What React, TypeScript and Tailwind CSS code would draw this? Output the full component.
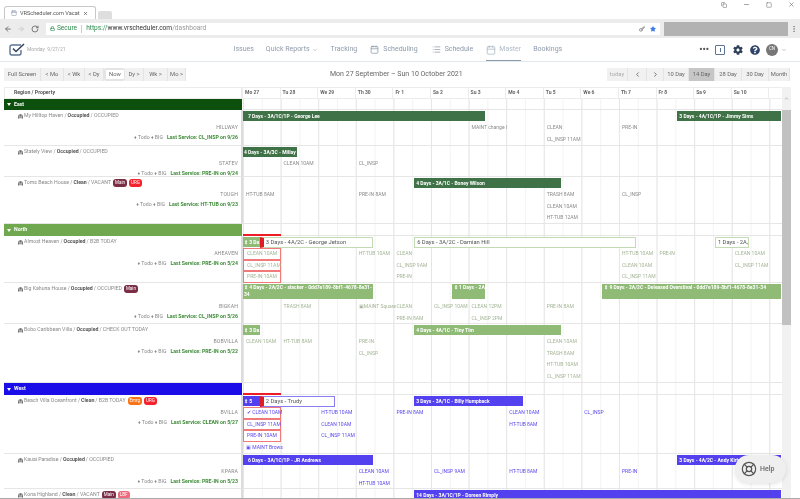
import React from "react";
import {
  ArrowLeft,
  ArrowRight,
  Calendar,
  ChevronDown,
  ChevronLeft,
  ChevronRight,
  Key,
  LifeBuoy,
  List,
  Lock,
  Minus,
  MoreVertical,
  RotateCw,
  Square,
  Star,
  X,
  ChevronUp,
  Copy,
  BedDouble,
} from "lucide-react";
import { FaCog, FaQuestionCircle } from "react-icons/fa";

type Tone = "east" | "north" | "west";
type Item = { c: number; r: number; t: string; boxed?: boolean };
type BarData = {
  c: number;
  span: number;
  t: string;
  outline?: boolean;
  marker?: boolean;
  tall?: boolean;
};
type Badge = { t: string; cls: string };
type Row = {
  h: number;
  first?: number;
  name: string;
  status: string;
  note: string;
  code: string;
  service: string;
  badges?: Badge[];
  bars: BarData[];
  items: Item[];
  flagged?: boolean;
};

const main = { t: "Main", cls: "bg-[#7a2d45]" };
const urg = { t: "URG", cls: "bg-[#f5222d]" };
const emrg = { t: "Emrg", cls: "bg-[#f97316]" };
const lbf = { t: "LBF", cls: "bg-[#ee6a7c]" };

const east: Row[] = [
  {
    h: 36,
    name: "My Hilltop Haven",
    status: "Occupied",
    note: "OCCUPIED",
    code: "HILLWAY",
    service: "CL_INSP on 9/26",
    bars: [
      { c: 0, span: 13, t: "7 Days - 3A/1C/1P - George Lee" },
      { c: 23, span: 6, t: "3 Days - 4A/1C/1P - Jimmy Sims" },
    ],
    items: [
      { c: 12, r: 2, t: "MAINT change l" },
      { c: 16, r: 2, t: "CLEAN" },
      { c: 20, r: 2, t: "PRE-IN" },
      { c: 16, r: 3, t: "CL_INSP 11AM" },
    ],
  },
  {
    h: 31,
    name: "Stately View",
    status: "Occupied",
    note: "OCCUPIED",
    code: "STATEV",
    service: "PRE-IN on 9/24",
    bars: [{ c: 0, span: 3, t: "4 Days - 3A/3C - Millay" }],
    items: [
      { c: 2, r: 2, t: "CLEAN 10AM" },
      { c: 6, r: 2, t: "CL_INSP" },
    ],
  },
  {
    h: 47,
    name: "Toms Beach House",
    status: "Clean",
    note: "VACANT",
    code: "TOUGH",
    service: "HT-TUB on 9/23",
    badges: [main, urg],
    bars: [{ c: 9, span: 8, t: "4 Days - 3A/1C - Boney Wilson" }],
    items: [
      { c: 0, r: 2, t: "HT-TUB 8AM" },
      { c: 6, r: 2, t: "PRE-IN 8AM" },
      { c: 16, r: 2, t: "TRASH 8AM" },
      { c: 20, r: 2, t: "CL_INSP" },
      { c: 16, r: 3, t: "CLEAN 10AM" },
      { c: 16, r: 4, t: "HT-TUB 12AM" },
    ],
  },
];

const north: Row[] = [
  {
    h: 47,
    flagged: true,
    name: "Almost Heaven",
    status: "Occupied",
    note: "B2B TODAY",
    code: "AHEAVEN",
    service: "PRE-IN on 5/24",
    bars: [
      { c: 0, span: 1, t: "⇕ 3 Da" },
      { c: 1, span: 6, t: "3 Days - 4A/2C - George Jetson", outline: true, marker: true },
      { c: 9, span: 12, t: "6 Days - 3A/2C - Damian Hill", outline: true },
      { c: 25, span: 2, t: "1 Days - 2A,", outline: true },
    ],
    items: [
      { c: 0, r: 2, t: "CLEAN 10AM", boxed: true },
      { c: 6, r: 2, t: "HT-TUB 10AM" },
      { c: 8, r: 2, t: "CLEAN" },
      { c: 20, r: 2, t: "HT-TUB 10AM" },
      { c: 22, r: 2, t: "PRE-IN" },
      { c: 26, r: 2, t: "CLEAN 10AM" },
      { c: 0, r: 3, t: "CL_INSP 11AM", boxed: true },
      { c: 8, r: 3, t: "CL_INSP 9AM" },
      { c: 20, r: 3, t: "CLEAN 10AM" },
      { c: 26, r: 3, t: "CL_INSP 11AM" },
      { c: 0, r: 4, t: "PRE-IN 10AM", boxed: true },
      { c: 8, r: 4, t: "PRE-IN" },
      { c: 20, r: 4, t: "CL_INSP 11AM" },
    ],
  },
  {
    h: 41,
    first: 18,
    name: "Big Kahuna House",
    status: "Occupied",
    note: "OCCUPIED",
    code: "BIGKAH",
    service: "CL_INSP on 5/26",
    badges: [main],
    bars: [
      { c: 0, span: 7, t: "⇕ 4 Days - 2A/2C - slacker - 0dd7e189-8bf1-4678-8e31-34", tall: true },
      { c: 11, span: 2, t: "⇕ 1 Days - 2A", tall: true },
      { c: 19, span: 10, t: "⇕ 9 Days - 2A/2C - Deleased Overstival - 0dd7e189-8bf1-4678-8e31-34", tall: true },
    ],
    items: [
      { c: 2, r: 2, t: "TRASH 8AM" },
      { c: 6, r: 2, t: "▣MAINT Square" },
      { c: 8, r: 2, t: "CLEAN" },
      { c: 10, r: 2, t: "CL_INSP 10AM" },
      { c: 12, r: 2, t: "CLEAN 12PM" },
      { c: 16, r: 2, t: "PRE-IN 8AM" },
      { c: 8, r: 3, t: "PRE-IN 8AM" },
      { c: 12, r: 3, t: "CL_INSP 2PM" },
    ],
  },
  {
    h: 59,
    name: "Bobo Caribbean Villa",
    status: "Occupied",
    note: "CHECK OUT TODAY",
    code: "BOBVILLA",
    service: "PRE-IN on 5/22",
    bars: [
      { c: 0, span: 1, t: "⇕ 3 Da" },
      { c: 9, span: 8, t: "4 Days - 4A/1C - Tiny Tim" },
    ],
    items: [
      { c: 0, r: 2, t: "CLEAN 10AM" },
      { c: 2, r: 2, t: "HT-TUB 8AM" },
      { c: 6, r: 2, t: "PRE-IN" },
      { c: 16, r: 2, t: "CLEAN 10AM" },
      { c: 6, r: 3, t: "CL_INSP" },
      { c: 16, r: 3, t: "TRASH 8AM" },
      { c: 16, r: 4, t: "HT-TUB 10AM" },
      { c: 16, r: 5, t: "CL_INSP 11AM" },
    ],
  },
];

const west: Row[] = [
  {
    h: 59,
    flagged: true,
    name: "Beach Villa Oceanfront",
    status: "Clean",
    note: "B2B TODAY",
    code: "BVILLA",
    service: "CLEAN on 5/27",
    badges: [emrg, urg],
    bars: [
      { c: 0, span: 1, t: "⇕ 5" },
      { c: 1, span: 4, t: "2 Days - Trudy", outline: true, marker: true },
      { c: 9, span: 6, t: "3 Days - 3A/1C - Billy Humpback" },
    ],
    items: [
      { c: 0, r: 2, t: "✔ CLEAN 10AM", boxed: true },
      { c: 4, r: 2, t: "HT-TUB 10AM" },
      { c: 8, r: 2, t: "PRE-IN 8AM" },
      { c: 14, r: 2, t: "CLEAN 10AM" },
      { c: 18, r: 2, t: "CL_INSP" },
      { c: 0, r: 3, t: "CL_INSP 11AM", boxed: true },
      { c: 4, r: 3, t: "CLEAN 10AM" },
      { c: 14, r: 3, t: "HT-TUB 8AM" },
      { c: 0, r: 4, t: "PRE-IN 10AM", boxed: true },
      { c: 4, r: 4, t: "CL_INSP 11AM" },
      { c: 0, r: 5, t: "▣ MAINT Brows" },
    ],
  },
  {
    h: 35,
    name: "Kauai Paradise",
    status: "Occupied",
    note: "OCCUPIED",
    code: "KPARA",
    service: "PRE-IN on 5/23",
    bars: [
      { c: 0, span: 7, t: "6 Days - 3A/1C/1P - JR Andrews" },
      { c: 23, span: 6, t: "3 Days - 4A/2C - Andy Kirby" },
    ],
    items: [
      { c: 6, r: 2, t: "CLEAN 10AM" },
      { c: 10, r: 2, t: "CL_INSP 9AM" },
      { c: 14, r: 2, t: "HT-TUB 8AM" },
      { c: 20, r: 2, t: "PRE-IN" },
      { c: 6, r: 3, t: "HT-TUB 10AM" },
    ],
  },
  {
    h: 30,
    name: "Kona Highland",
    status: "Clean",
    note: "VACANT",
    code: "",
    service: "",
    badges: [main, lbf],
    bars: [{ c: 9, span: 20, t: "14 Days - 3A/1C/1P - Doreen Rimply" }],
    items: [],
  },
];

const days = ["Mo 27", "Tu 28", "We 29", "Th 30", "Fr 1", "Sa 2", "Su 3", "Mo 4", "Tu 5", "We 6", "Th 7", "Fr 8", "Sa 9", "Su 10"];

const barColor: Record<Tone, string> = {
  east: "bg-[#3f7246]",
  north: "bg-[#8fbb76]",
  west: "bg-[#5340ee]",
};
const outlineColor: Record<Tone, string> = {
  east: "border-[#3f7246]",
  north: "border-[#c3dab4]",
  west: "border-[#8a7cf2]",
};
const itemColor: Record<Tone, string> = {
  east: "text-[#8a8a8a]",
  north: "text-[#a3b596]",
  west: "text-[#5a49ea]",
};

function TimeBar({ b, tone }: { b: BarData; tone: Tone }) {
  const side = b.c + b.span >= 29 ? "mr-0" : "mr-[2px]";
  if (b.outline) {
    return (
      <div
        style={{ gridColumn: `${b.c + 1} / span ${b.span}`, gridRow: 1 }}
        className={`${side} mt-[1px] flex h-[11px] items-center overflow-hidden whitespace-nowrap border bg-white pl-[2px] text-[5.8px] text-[#555] ${outlineColor[tone]} ${b.marker ? "-ml-[2px] border-l-[4px] border-l-[#e01b24]" : "ml-[2px]"}`}
      >
        {b.t}
      </div>
    );
  }
  return (
    <div
      style={{ gridColumn: `${b.c + 1} / span ${b.span}`, gridRow: 1 }}
      className={`${side} mt-[1px] overflow-hidden text-[5px] font-bold text-white ${b.c > 0 ? "ml-[2px] pl-[2px]" : b.span > 3 && !b.tall ? "pl-[5px]" : "pl-[1px]"} ${b.tall ? "h-[15px] break-all text-[4.7px] leading-[7px]" : "h-[10px] whitespace-nowrap leading-[10px]"} ${barColor[tone]}`}
    >
      {b.t}
    </div>
  );
}

function Timeline({ row, tone }: { row: Row; tone: Tone }) {
  const first = row.first ?? 12;
  return (
    <div
      className="relative grid w-[539px] shrink-0 grid-cols-[repeat(28,18.8px)_12px] auto-rows-[11.7px] border-b border-[#e6e6e6] bg-[linear-gradient(to_right,#e6e6e6_1px,transparent_1px),linear-gradient(to_right,#f3f3f3_1px,transparent_1px)] bg-[size:37.6px_100%,18.8px_100%]"
      style={{ height: row.h, gridTemplateRows: `${first}px` }}
    >
      {row.flagged && <div className="absolute left-0 -top-[2px] h-[2px] w-[38px] bg-[#ee1c25]" />}
      {row.bars.map((b) => (
        <TimeBar key={b.t} b={b} tone={tone} />
      ))}
      {row.items.map((it) => (
        <div
          key={it.c + "-" + it.r}
          style={{ gridColumn: `${it.c + 1} / span ${it.boxed ? 2 : 6}`, gridRow: it.r }}
          className={`flex items-center whitespace-nowrap pl-[3px] text-[5px] ${itemColor[tone]} ${it.boxed ? "border border-[#f07a7a] pl-[2px]" : ""}`}
        >
          {it.t}
        </div>
      ))}
    </div>
  );
}

function PropertyRow({ row, tone }: { row: Row; tone: Tone }) {
  return (
    <div className="flex">
      <div
        className="w-[239px] shrink-0 overflow-hidden border-b border-r-2 border-[#e6e6e6] border-r-[#dcdcdc] pl-[14px] pr-[3px] text-[5.2px] text-[#888]"
        style={{ height: row.h }}
      >
        <div className="flex items-start" style={{ height: row.first ?? 12 }}>
          <div className="flex h-[12px] items-center gap-[1px] whitespace-nowrap">
            <BedDouble size={5} strokeWidth={3} className="text-[#444]" />
            <span>{row.name} / </span>
            <span className="font-bold text-[#555]">{row.status}</span>
            <span> / {row.note}</span>
            {row.badges?.map((b) => (
              <span
                key={b.t}
                className={`ml-[1px] flex h-[8px] items-center rounded-[3px] px-[2px] text-[4.5px] text-white ${b.cls}`}
              >
                {b.t}
              </span>
            ))}
          </div>
        </div>
        {row.code && (
          <div className="flex h-[11.7px] items-center justify-end tracking-[0.1px]">{row.code}</div>
        )}
        {row.service && (
          <div className="flex h-[8px] items-center justify-end gap-[2px] whitespace-nowrap">
            <span>♦ Todo ♦ BIG</span>
            <span className="ml-[2px] font-bold text-[#3d8b37]">Last Service: {row.service}</span>
          </div>
        )}
      </div>
      <Timeline row={row} tone={tone} />
    </div>
  );
}

function Section({ label, cls, h }: { label: string; cls: string; h: number }) {
  return (
    <div className="flex" style={{ height: h }}>
      <div className={`flex w-[238px] shrink-0 items-center gap-[3px] pl-[3px] text-[5.2px] font-bold text-white ${cls}`}>
        <span className="h-0 w-0 border-x-[2px] border-t-[3px] border-x-transparent border-t-white" />
        {label}
      </div>
      <div className="ml-[1px] w-[539px] shrink-0 border-b border-[#e6e6e6] bg-[linear-gradient(to_right,#e6e6e6_1px,transparent_1px),linear-gradient(to_right,#f3f3f3_1px,transparent_1px)] bg-[size:37.6px_100%,18.8px_100%]" />
    </div>
  );
}

function Btn({ t, w, cls = "" }: { t: React.ReactNode; w: number; cls?: string }) {
  return (
    <div
      className={`flex h-[13px] items-center justify-center border-r border-[#e4e4e4] text-[5.8px] text-[#666] ${cls}`}
      style={{ width: w }}
    >
      {t}
    </div>
  );
}

function BrowserBar() {
  return (
    <div className="h-[38px] shrink-0 bg-white">
      <div className="flex h-[19px] items-end justify-between pl-[4px] pr-[5px]">
        <div className="flex items-end">
          <div className="flex h-[13px] w-[92px] items-center gap-[3px] rounded-t-[3px] border border-b-0 border-[#c8c8c8] bg-white pl-[6px] text-[5.6px] text-[#555]">
            <Calendar size={6} className="text-[#7b8ba0]" />
            <span className="whitespace-nowrap">VRScheduler.com Vacat</span>
            <X size={5} strokeWidth={3} className="text-[#555]" />
          </div>
          <div className="ml-[2px] h-[8px] w-[14px] rounded-t-[2px] bg-[#dedede]" />
        </div>
        <div className="mb-[11px] flex items-center gap-[16px] text-[#666]">
          <Copy size={6} />
          <Minus size={7} />
          <Square size={6} />
          <X size={7} />
        </div>
      </div>
      <div className="flex h-[19px] items-center bg-[#ececec] pl-[4px] pr-[2px]">
        <ArrowLeft size={8} strokeWidth={2.5} className="text-[#666]" />
        <ArrowRight size={8} strokeWidth={2.5} className="ml-[5px] text-[#c8c8c8]" />
        <RotateCw size={8} strokeWidth={2.5} className="ml-[6px] text-[#666]" />
        <div className="ml-[7px] flex h-[12px] w-[616px] items-center bg-white pl-[4px] pr-[4px] text-[6.6px]">
          <Lock size={5} strokeWidth={3} className="text-[#2d8a4e]" />
          <span className="ml-[2px] text-[#2d8a4e]">Secure</span>
          <span className="mx-[4px] h-[8px] w-px bg-[#ccc]" />
          <span className="text-[#2d8a4e]">https://</span>
          <span className="text-[#333]">www.vrscheduler.com</span>
          <span className="text-[#999]">/dashboard</span>
          <Key size={6} strokeWidth={3} className="ml-auto text-[#777]" />
          <Star size={6} className="ml-[5px] fill-[#3b78e7] text-[#3b78e7]" />
        </div>
        <div className="ml-[4px] h-[14px] w-[124px] bg-[#b2b2b2]" />
        <MoreVertical size={8} className="ml-[2px] text-[#777]" />
      </div>
    </div>
  );
}

function AppHeader() {
  return (
    <div className="flex h-[24px] shrink-0 items-center border-b border-[#e2e8ee] bg-white text-[7px] text-[#8e9bab]">
      <svg width="16" height="13" viewBox="0 0 16 13" className="ml-[9px]" fill="none">
        <path d="M12 2H3a2 2 0 0 0-2 2v6a2 2 0 0 0 2 2h7a2 2 0 0 0 2-2V7" stroke="#5c7391" strokeWidth="1.4" />
        <path d="M4 5.5l3 3L15 1" stroke="#33465f" strokeWidth="1.6" />
      </svg>
      <span className="ml-[2px] text-[5px] text-[#aaa]">Monday&nbsp;&nbsp;9/27/21</span>
      <span className="ml-[168px]">Issues</span>
      <span className="ml-[12px] flex items-center gap-[2px]">
        Quick Reports <ChevronDown size={6} />
      </span>
      <span className="ml-[13px]">Tracking</span>
      <Calendar size={9} className="ml-[13px]" />
      <span className="ml-[4px]">Scheduling</span>
      <List size={9} className="ml-[14px]" />
      <span className="ml-[4px]">Schedule</span>
      <div className="relative ml-[13px] flex h-full items-center text-[#b0bac6]">
        <Calendar size={10} />
        <span className="ml-[3px]">Master</span>
        <div className="absolute inset-x-0 bottom-0 h-[1px] bg-[#8e9bab]" />
      </div>
      <span className="ml-[12px]">Bookings</span>
      <div className="ml-auto mr-[13px] flex items-center">
        <span className="text-[9px] font-bold leading-none text-[#555]">•••</span>
        <div className="ml-[6px] flex h-[10px] w-[10px] items-center justify-center rounded-[1px] border border-[#5c7391]">
          <div className="h-[4px] w-[1px] bg-[#5c7391]" />
        </div>
        <FaCog size={10} className="ml-[8px] text-[#2f3f58]" />
        <FaQuestionCircle size={10} className="ml-[7px] text-[#2f4468]" />
        <div className="ml-[6px] flex h-[12px] w-[12px] items-center justify-center rounded-full bg-[#777] text-[4.5px] text-white">
          CN
        </div>
        <ChevronDown size={6} className="ml-[3px]" />
      </div>
    </div>
  );
}

function Toolbar() {
  return (
    <div className="flex h-[25px] shrink-0 items-center pl-[4px] pr-[10px]">
      <div className="flex w-[300px] items-center">
        <Btn t="Full Screen" w={37} cls="bg-[#f1f1f1]" />
        <Btn t="< Mo" w={23} cls="bg-[#f1f1f1]" />
        <Btn t="< Wk" w={21} cls="bg-[#f1f1f1]" />
        <Btn t="< Dy" w={19} cls="bg-[#f1f1f1]" />
        <Btn t="Now" w={21} cls="rounded-[2px] border-2 border-[#555] bg-white" />
        <Btn t="Dy >" w={19} cls="bg-[#f1f1f1]" />
        <Btn t="Wk >" w={24} cls="bg-[#f1f1f1]" />
        <Btn t="Mo >" w={18} cls="bg-[#f1f1f1]" />
      </div>
      <div className="w-[303px] pl-[26px] text-[7px] text-[#666]">Mon 27 September – Sun 10 October 2021</div>
      <div className="flex items-center">
        <Btn t="today" w={21} cls="bg-[#f1f1f1] text-[#aaa]" />
        <Btn t={<ChevronLeft size={7} strokeWidth={3} />} w={19} cls="bg-[#f1f1f1]" />
        <Btn t={<ChevronRight size={7} strokeWidth={3} />} w={17} cls="bg-[#f1f1f1]" />
        <Btn t="10 Day" w={25} cls="bg-[#f1f1f1]" />
        <Btn t="14 Day" w={26} cls="bg-[#c6c6c6]" />
        <Btn t="28 Day" w={27} cls="bg-[#f1f1f1]" />
        <Btn t="30 Day" w={27} cls="bg-[#f1f1f1]" />
        <Btn t="Month" w={21} cls="bg-[#f1f1f1]" />
      </div>
    </div>
  );
}

export default function App() {
  return (
    <div className="relative flex h-[499px] w-[800px] flex-col overflow-hidden border-b border-[#aaa] bg-white blur-[0.5px] font-['Roboto',sans-serif]">
      <BrowserBar />
      <AppHeader />
      <Toolbar />
      <div className="flex min-h-0 flex-1 pl-[4px]">
        <div className="w-[778px] shrink-0">
          <div className="flex h-[12px]">
            <div className="flex w-[239px] shrink-0 items-center border border-r-2 border-[#ececec] pl-[9px] text-[5.2px] font-bold text-[#555]">
              Region / Property
            </div>
            <div className="flex w-[539px] shrink-0 border-y border-[#ececec]">
              {days.map((d) => (
                <div
                  key={d}
                  className="flex w-[37.6px] shrink-0 items-center border-r border-[#ececec] pl-[2px] text-[5px] font-bold text-[#666]"
                >
                  {d}
                </div>
              ))}
            </div>
          </div>
          <Section label="East" cls="bg-[#0d4f0c]" h={11} />
          {east.map((r) => (
            <PropertyRow key={r.name} row={r} tone="east" />
          ))}
          <Section label="North" cls="bg-[#6fa84f]" h={12} />
          {north.map((r) => (
            <PropertyRow key={r.name} row={r} tone="north" />
          ))}
          <Section label="West" cls="bg-[#1a0de8]" h={12} />
          {west.map((r) => (
            <PropertyRow key={r.name} row={r} tone="west" />
          ))}
        </div>
        <div className="flex w-[9px] shrink-0 flex-col bg-[#f1f1f1]">
          <div className="flex h-[23px] items-center justify-center text-[#999]">
            <ChevronUp size={5} strokeWidth={3} />
          </div>
          <div className="h-[215px] bg-[#c1c1c1]" />
        </div>
      </div>
      <div className="absolute left-[735px] top-[455px] flex h-[28px] w-[51px] items-center gap-[3px] rounded-[14px] bg-[#efefef] pl-[6px] text-[7px] font-medium text-[#666] shadow-[0_1px_4px_rgba(0,0,0,0.12)]">
        <LifeBuoy size={16} strokeWidth={1.8} className="text-[#555]" />
        Help
      </div>
    </div>
  );
}
